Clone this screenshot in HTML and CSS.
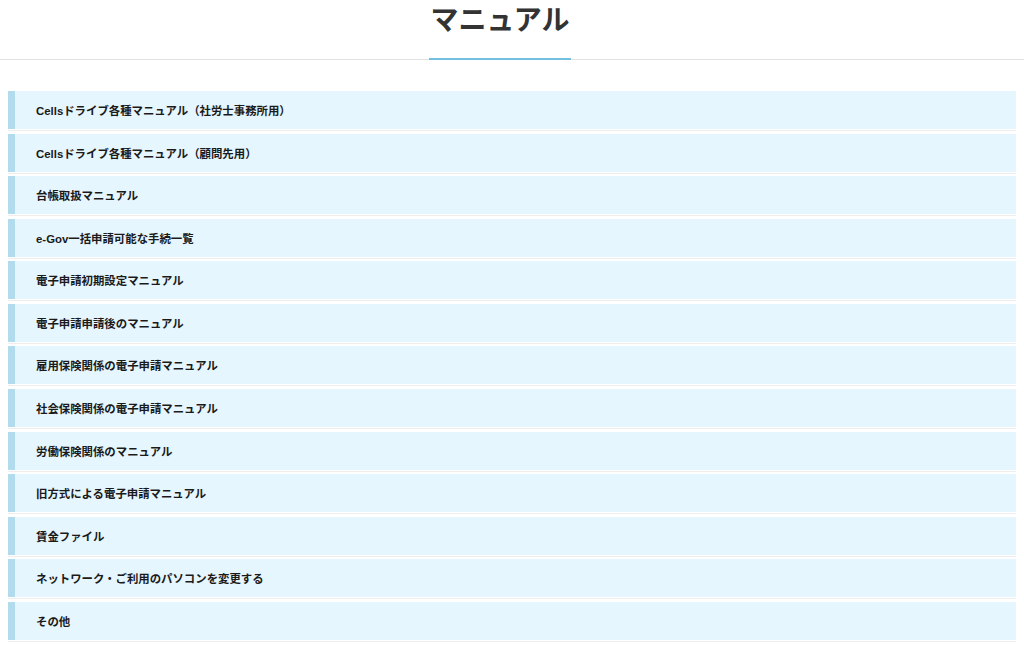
FILE: index.html
```html
<!DOCTYPE html>
<html lang="ja">
<head>
<meta charset="utf-8">
<title>マニュアル</title>
<link rel="stylesheet" href="styles.css">
</head>
<body>
<header class="page-header">
  <h1 class="page-title">マニュアル</h1>
</header>
<main class="content">
  <ul class="manual-list">
    <li class="manual-item"><a class="manual-link" href="#">Cellsドライブ各種マニュアル（社労士事務所用）</a></li>
    <li class="manual-item"><a class="manual-link" href="#">Cellsドライブ各種マニュアル（顧問先用）</a></li>
    <li class="manual-item"><a class="manual-link" href="#">台帳取扱マニュアル</a></li>
    <li class="manual-item"><a class="manual-link" href="#">e-Gov一括申請可能な手続一覧</a></li>
    <li class="manual-item"><a class="manual-link" href="#">電子申請初期設定マニュアル</a></li>
    <li class="manual-item"><a class="manual-link" href="#">電子申請申請後のマニュアル</a></li>
    <li class="manual-item"><a class="manual-link" href="#">雇用保険関係の電子申請マニュアル</a></li>
    <li class="manual-item"><a class="manual-link" href="#">社会保険関係の電子申請マニュアル</a></li>
    <li class="manual-item"><a class="manual-link" href="#">労働保険関係のマニュアル</a></li>
    <li class="manual-item"><a class="manual-link" href="#">旧方式による電子申請マニュアル</a></li>
    <li class="manual-item"><a class="manual-link" href="#">賃金ファイル</a></li>
    <li class="manual-item"><a class="manual-link" href="#">ネットワーク・ご利用のパソコンを変更する</a></li>
    <li class="manual-item"><a class="manual-link" href="#">その他</a></li>
  </ul>
</main>
</body>
</html>
```
FILE: styles.css
```css
html, body {
  margin: 0;
  padding: 0;
  background: #ffffff;
}
body {
  font-family: "Liberation Sans", "Noto Sans CJK JP", sans-serif;
  color: #222;
}
.page-header {
  height: 59px;
  border-bottom: 1px solid #e2e2e2;
  display: flex;
  justify-content: center;
  padding-right: 24px;
}
.page-title {
  margin: 0;
  height: 60px;
  box-sizing: border-box;
  font-family: "Noto Sans CJK JP", sans-serif;
  font-size: 28px;
  font-weight: 700;
  line-height: 36px;
  color: #333;
  border-bottom: 2px solid #72c0de;
  width: 142px;
  white-space: nowrap;
  display: flex;
  justify-content: center;
}
.content {
  padding: 31px 8px 0 8px;
}
.manual-list {
  list-style: none;
  margin: 0;
  padding: 0;
}
.manual-item {
  padding-bottom: 1px;
  border-bottom: 1px solid #eeeeee;
  margin-bottom: 2.58px;
}
.manual-link {
  display: flex;
  align-items: center;
  height: 38px;
  background: #e6f6fe;
  border-left: 7px solid #b2dcee;
  padding-left: 21px;
  font-size: 11.4px;
  font-weight: 700;
  color: #1a1a1a;
  text-decoration: none;
}
```
